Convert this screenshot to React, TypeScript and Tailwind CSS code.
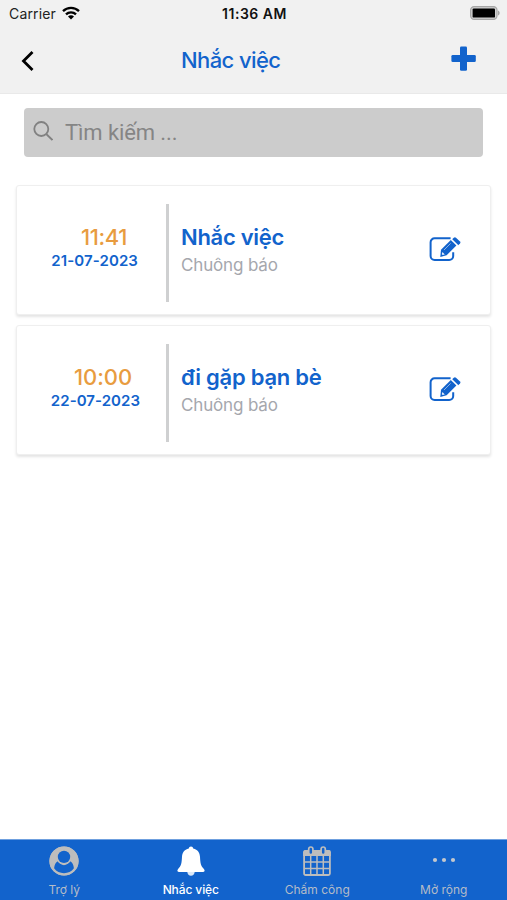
import React from "react";
import clsx from "clsx";

interface Reminder {
    time: string;
    date: string;
    title: string;
    type: string;
    timeClass: string;
    dateClass: string;
    titleClass: string;
}

const reminders: Reminder[] = [
    {
        time: "11:41",
        date: "21-07-2023",
        title: "Nhắc việc",
        type: "Chuông báo",
        timeClass: "pr-[39px] tracking-[-0.4px]",
        dateClass: "pr-[28px] tracking-[0.1px]",
        titleClass: "tracking-[-0.3px]",
    },
    {
        time: "10:00",
        date: "22-07-2023",
        title: "đi gặp bạn bè",
        type: "Chuông báo",
        timeClass: "pr-[34px] tracking-[-0.1px]",
        dateClass: "pr-[26px] tracking-[0.05px]",
        titleClass: "tracking-[-0.25px]",
    },
];

const WifiIcon = () => (
    <svg className="w-[18px] h-[14px] mb-[1px]" viewBox="0 0 18 14" fill="none" stroke="#000" strokeWidth="2.3">
        <path d="M1 5.1a11.4 11.4 0 0 1 16 0" />
        <path d="M4 8.4a7 7 0 0 1 10 0" />
        <path d="M9 13.6 6 10.6a4.2 4.2 0 0 1 6 0z" fill="#000" stroke="none" />
    </svg>
);

const BatteryIcon = () => (
    <svg className="w-[30px] h-[14px] mb-[1px]" viewBox="0 0 30 14">
        <rect x="0.6" y="0.6" width="26.4" height="12.8" rx="3.6" fill="#d0d0d0" stroke="#a6a6a6" strokeWidth="1.2" />
        <rect x="2.6" y="2.4" width="22.4" height="9.2" rx="1.2" fill="#000" />
        <path d="M28 4.6c2.2.8 2.2 4 0 4.8z" fill="#a6a6a6" />
    </svg>
);

const EditIcon = () => (
    <svg className="w-[32px] h-[26px]" viewBox="0 0 32 26" fill="none">
        <path
            d="M21.6 2.3H5.6a4 4 0 0 0-4 4V20a4 4 0 0 0 4 4h14.6a4 4 0 0 0 4-4v-3.8"
            stroke="#1263cc"
            strokeWidth="2"
        />
        <path d="M21.8 4 27.4 9.4 17.6 19.2 11.3 21 12 13.8z" fill="#1263cc" />
        <path d="M24.8 1.7q1.1-1 2.2 0l4 3.9q1 1 0 2L29.2 9.2l-6.1-5.9z" fill="#1263cc" />
        <path d="M23 3.6 29 9.4" stroke="#fff" strokeWidth="0.6" />
        <path d="M21.6 7.4 15 14" stroke="#9bbdea" strokeWidth="0.9" />
        <path d="m13.4 16 2.4 2.4-2.1.7-.9-.9z" fill="#e9f0fa" />
    </svg>
);

const PersonIcon = () => (
    <svg className="w-[30px] h-[30px]" viewBox="0 0 30 30">
        <circle cx="15" cy="15" r="14.6" fill="#bdbdbd" />
        <path
            d="M5.1 22.3c.4-3.8 1.6-6.1 3.8-7 3.1 5.1 9.1 5.1 12.2 0 2.2.9 3.4 3.2 3.8 7-4.6 6.5-15.2 6.5-19.8 0z"
            fill="#1263cc"
        />
        <circle cx="15" cy="10.9" r="7.7" fill="#bdbdbd" />
        <circle cx="15" cy="10.9" r="6.2" fill="#1263cc" />
        <circle cx="15" cy="15" r="13.9" fill="none" stroke="#bdbdbd" strokeWidth="1.4" />
    </svg>
);

const BellIcon = () => (
    <svg className="w-[28px] h-[30px]" viewBox="0 0 28 30" fill="#fff">
        <path d="M14 .4c1.3 0 2 .8 2.2 2 4.6 1 6.6 4.3 6.8 8.4.3 6.4.8 9.2 3.9 12.2 1.1 1.2 1 2.9-.7 2.9H1.8c-1.7 0-1.8-1.7-.7-2.9 3.1-3 3.6-5.8 3.9-12.2.2-4.1 2.2-7.4 6.8-8.4.2-1.2.9-2 2.2-2z" />
        <path d="M10.3 25.9h7.4c-.2 2.3-1.7 3.8-3.7 3.8s-3.5-1.5-3.7-3.8z" fill="#dbe8f8" />
    </svg>
);

const CalendarIcon = () => (
    <svg className="w-[28px] h-[30px]" viewBox="0 0 28 30" fill="none" stroke="#bdbdbd">
        <path d="M.2 6.2Q.2 4 2.4 4h23.2q2.2 0 2.2 2.2V10H.2z" fill="#bdbdbd" stroke="none" />
        <rect x="1.1" y="5" width="25.8" height="24" rx="1.5" strokeWidth="1.8" />
        <path d="M7.7 10v19M14 10v19M20.3 10v19M1 15.9h26M1 22.4h26" strokeWidth="1.5" />
        <rect x="5.7" y="1" width="4.2" height="7.6" rx="2.1" fill="#1263cc" strokeWidth="1.7" />
        <rect x="18.1" y="1" width="4.2" height="7.6" rx="2.1" fill="#1263cc" strokeWidth="1.7" />
    </svg>
);

const MoreIcon = () => (
    <svg className="w-[24px] h-[30px]" viewBox="0 0 24 30" fill="#c4c8ce">
        <circle cx="3" cy="14" r="2.1" />
        <circle cx="12" cy="14" r="2.1" />
        <circle cx="21" cy="14" r="2.1" />
    </svg>
);

const tabs = [
    { label: "Trợ lý", icon: <PersonIcon />, active: false },
    { label: "Nhắc việc", icon: <BellIcon />, active: true },
    { label: "Chấm công", icon: <CalendarIcon />, active: false },
    { label: "Mở rộng", icon: <MoreIcon />, active: false },
];

const ReminderCard: React.FC<{ item: Reminder }> = ({ item }) => (
    <div className="flex items-center h-[130px] bg-white rounded-[3px] border border-[#efefef] shadow-[0_2px_3px_rgba(0,0,0,0.11)]">
        <div className="w-[149px] flex flex-col items-end pb-[5px]">
            <span className={clsx("text-[22px] leading-[26px] font-medium text-[#e89c3f]", item.timeClass)}>
                {item.time}
            </span>
            <span className={clsx("text-[15px] leading-[22px] font-semibold text-[#1263cc]", item.dateClass)}>
                {item.date}
            </span>
        </div>
        <div className="w-[3px] h-[98px] mt-[6px] bg-[#cfd0d1]" />
        <div className="flex-1 pl-[12px] pt-[2px] flex flex-col">
            <span className={clsx("text-[22px] leading-[28px] font-semibold text-[#1263cc]", item.titleClass)}>
                {item.title}
            </span>
            <span className="text-[17px] leading-[28px] tracking-[-0.15px] text-[#a5a7ad]">{item.type}</span>
        </div>
        <button className="mr-[29px] mb-[3px]">
            <EditIcon />
        </button>
    </div>
);

const App: React.FC = () => {
    return (
        <div className="w-[507px] h-[900px] flex flex-col bg-white overflow-hidden font-['Inter','Noto_Sans',sans-serif]">
            <header className="h-[94px] bg-[#f1f1f1] border-b border-[#e9e9e9]">
                <div className="h-[27px] grid grid-cols-3 items-center pl-[9px] pr-[7px]">
                    <div className="flex items-center gap-[6px]">
                        <span className="text-[14px] tracking-[0.15px] text-[#222]">Carrier</span>
                        <WifiIcon />
                    </div>
                    <span className="text-center text-[14px] tracking-[0.5px] font-semibold text-[#111]">11:36 AM</span>
                    <div className="flex justify-end">
                        <BatteryIcon />
                    </div>
                </div>
                <div className="h-[66px] grid grid-cols-[160px_1fr_56px] items-center">
                    <svg className="ml-[21px] w-[14px] h-[22px] mt-[2px]" viewBox="0 0 14 22" fill="none">
                        <path d="M11.5 2 2.5 11l9 9" stroke="#000" strokeWidth="2.8" />
                    </svg>
                    <h1 className="pl-[21px] text-[22px] tracking-[-0.6px] font-medium text-[#1263cc]">Nhắc việc</h1>
                    <svg className="w-[25px] h-[25px] mb-[4px]" viewBox="0 0 25 25" fill="#1263cc">
                        <rect x="9" y="0.4" width="7" height="24.4" rx="1.3" />
                        <rect x="0.4" y="9" width="24.4" height="7" rx="1.3" />
                    </svg>
                </div>
            </header>

            <main className="flex-1 px-[16px] pt-[14px]">
                <div className="mx-[8px] h-[49px] flex items-center rounded-[4px] bg-[#cccccc] pl-[9px]">
                    <svg className="w-[20px] h-[20px] mb-[3px]" viewBox="0 0 20 20" fill="none" stroke="#818181" strokeWidth="1.8">
                        <circle cx="8.3" cy="8" r="7" />
                        <path d="m13.2 13 6.2 6" />
                    </svg>
                    <span className="ml-[12px] text-[22px] tracking-[-0.1px] text-[#858585] font-['Roboto','Noto_Sans',sans-serif]">
                        Tìm kiếm ...
                    </span>
                </div>
                <div className="mt-[28px] flex flex-col gap-[10px]">
                    {reminders.map((item) => (
                        <ReminderCard key={item.date} item={item} />
                    ))}
                </div>
            </main>

            <nav className="h-[61px] grid grid-cols-4 bg-[#1263cc] pt-[6px] pl-[1px] border-t border-[#6fa0df]">
                {tabs.map((tab) => (
                    <div key={tab.label} className="flex flex-col items-center">
                        {tab.icon}
                        <span
                            className={clsx(
                                "mt-[6px] text-[12px] leading-[16px]",
                                tab.active ? "text-white font-medium tracking-[-0.1px]" : "text-[#b4bcc8]"
                            )}
                        >
                            {tab.label}
                        </span>
                    </div>
                ))}
            </nav>
        </div>
    );
};

export default App;
